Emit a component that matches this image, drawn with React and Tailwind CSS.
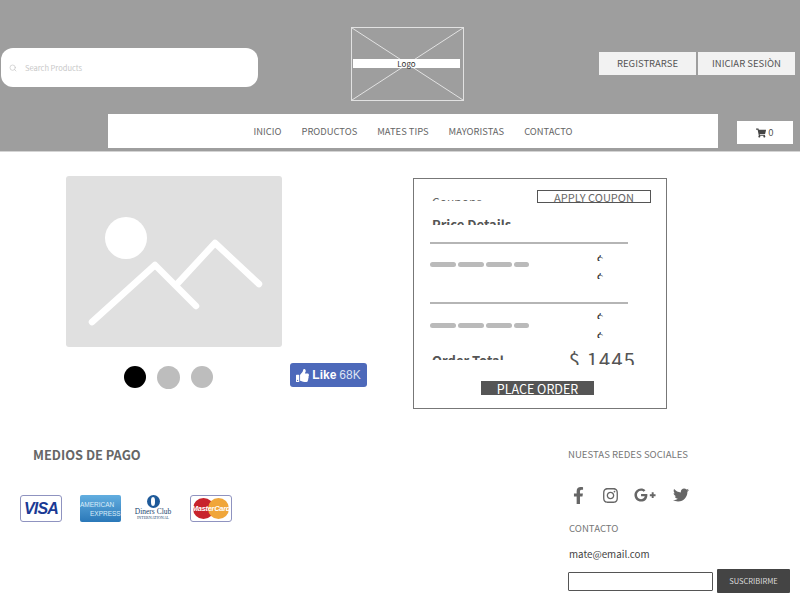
import React from "react";
import { Search } from "lucide-react";
import {
  FaFacebookF,
  FaInstagram,
  FaGooglePlusG,
  FaTwitter,
  FaThumbsUp,
  FaShoppingCart,
} from "react-icons/fa";

const navItems = ["INICIO", "PRODUCTOS", "MATES TIPS", "MAYORISTAS", "CONTACTO"];

const Bars = () => (
  <div className="flex gap-[2px]">
    <div className="w-[26px] h-[5px] rounded-full bg-[#bababa]"></div>
    <div className="w-[26px] h-[5px] rounded-full bg-[#bababa]"></div>
    <div className="w-[26px] h-[5px] rounded-full bg-[#bababa]"></div>
    <div className="w-[15px] h-[5px] rounded-full bg-[#bababa]"></div>
  </div>
);

const Dollar = () => (
  <div className="h-[8px] overflow-hidden text-[14px] leading-[16px] text-[#333]">$</div>
);

const Header = () => (
  <header className="h-[152px] bg-[#9e9e9e] border-b border-[#d4d4d4]">
    <div className="flex items-start h-[114px]">
      <div className="flex items-center ml-[1px] mt-[48px] w-[257px] h-[39px] rounded-[12px] bg-white pl-[8px]">
        <Search size={8} className="text-[#c4c4c4]" />
        <span className="ml-[8px] text-[7.5px] text-[#c8c8c8]">Search Products</span>
      </div>
      <div className="relative ml-[93px] mt-[27px] w-[113px] h-[74px] border border-[#e2e2e2]">
        <svg className="w-full h-full" viewBox="0 0 111 72" preserveAspectRatio="none">
          <path d="M0 0L111 72M111 0L0 72" stroke="#e2e2e2" strokeWidth="1" fill="none" />
        </svg>
        <div className="absolute left-[1px] top-[31px] w-[107px] h-[9px] bg-white flex items-center justify-center text-[8px] leading-none text-[#333]">
          Logo
        </div>
      </div>
      <div className="flex ml-[135px] mt-[52px] gap-[2px]">
        <div className="w-[97px] h-[23px] bg-[#f2f2f2] flex items-center justify-center text-[9.5px] text-[#555]">REGISTRARSE</div>
        <div className="w-[97px] h-[23px] bg-[#f2f2f2] flex items-center justify-center text-[9.5px] text-[#555]">INICIAR SESIÒN</div>
      </div>
    </div>
    <div className="flex items-start">
      <nav className="flex items-center justify-center gap-[20px] ml-[108px] w-[610px] h-[34px] bg-white text-[9.4px] text-[#666]">
        {navItems.map((item) => (
          <span key={item}>{item}</span>
        ))}
      </nav>
      <div className="flex items-center justify-center gap-[2px] ml-[19px] mt-[7px] w-[56px] h-[23px] bg-white text-[9.5px] text-[#555]">
        <FaShoppingCart size={10} className="text-[#444]" />
        <span>0</span>
      </div>
    </div>
  </header>
);

const Gallery = () => (
  <div className="ml-[66px] mt-[24px] w-[302px]">
    <div className="w-[216px] h-[171px] rounded-[3px] bg-[#e0e0e0]">
      <svg width="216" height="171" viewBox="0 0 216 171" fill="none">
        <circle cx="60" cy="62" r="21" fill="white" />
        <path
          d="M26 146L89 89L130 130M112 107L149 67L193 108"
          stroke="white"
          strokeWidth="6.5"
          strokeLinecap="round"
          strokeLinejoin="round"
        />
      </svg>
    </div>
    <div className="flex items-start mt-[16px]">
      <div className="w-[22px] h-[22px] ml-[58px] mt-[3px] rounded-full bg-black"></div>
      <div className="w-[23px] h-[23px] ml-[11px] mt-[3px] rounded-full bg-[#bdbdbd]"></div>
      <div className="w-[22px] h-[22px] ml-[11px] mt-[3px] rounded-full bg-[#bdbdbd]"></div>
      <div className="flex items-center justify-center gap-[3px] ml-[77px] w-[77px] h-[24px] rounded-[3px] bg-[#4d69ba] text-[12px] text-white font-['Liberation_Sans',sans-serif]">
        <FaThumbsUp size={13} />
        <span className="font-bold">Like</span>
        <span className="text-[#dfe4f3]">68K</span>
      </div>
    </div>
  </div>
);

const OrderCard = () => (
  <div className="ml-[45px] mt-[26px] w-[254px] h-[231px] border border-[#777] pl-[16px]">
    <div className="flex items-start h-[23px]">
      <div className="ml-[2px] mt-[15px] h-[7px] overflow-hidden text-[12px] leading-[16px] text-[#666]">Coupons</div>
      <div className="ml-auto mr-[15px] mt-[11px] w-[114px] h-[13px] border border-[#555] overflow-hidden text-center text-[11px] leading-[12px] text-[#666]">
        APPLY COUPON
      </div>
    </div>
    <div className="ml-[2px] mt-[14px] h-[9px] overflow-hidden text-[13px] leading-[18px] font-bold text-[#555]">Price Details</div>
    <div className="mt-[17px] w-[198px] h-[2px] bg-[#b5b5b5]"></div>
    <div className="flex items-start w-[174px] h-[58px]">
      <div className="mt-[18px]"><Bars /></div>
      <div className="ml-auto mt-[9px] flex flex-col gap-[10px]">
        <Dollar />
        <Dollar />
      </div>
    </div>
    <div className="w-[198px] h-[2px] bg-[#b5b5b5]"></div>
    <div className="flex items-start w-[174px] h-[46px]">
      <div className="mt-[19px]"><Bars /></div>
      <div className="ml-auto mt-[7px] flex flex-col gap-[11px]">
        <Dollar />
        <Dollar />
      </div>
    </div>
    <div className="flex items-start w-[206px] h-[15px] overflow-hidden">
      <div className="ml-[2px] mt-[2px] h-[8px] overflow-hidden text-[13px] leading-[18px] font-bold text-[#555]">Order Total</div>
      <div className="ml-auto -mt-[3px] text-[20px] leading-[26px] tracking-[1.2px] text-[#555]">$ 1445</div>
    </div>
    <div className="ml-[51px] mt-[16px] w-[113px] h-[14px] overflow-hidden bg-[#555] text-center text-[12.5px] leading-[16px] text-white">
      PLACE ORDER
    </div>
  </div>
);

const Visa = () => (
  <div className="w-[42px] h-[27px] rounded-[3px] border border-[#8f93c0] bg-white flex items-center justify-center text-[16px] leading-none font-bold italic text-[#1a3a94] font-['Liberation_Sans',sans-serif] tracking-[-0.8px]">
    VISA
  </div>
);

const Amex = () => (
  <div className="flex flex-col items-start justify-center w-[41px] h-[27px] rounded-[2px] bg-gradient-to-b from-[#62aee0] to-[#2a78b8] text-[6.5px] leading-[9px] text-[#dcedf9] font-['Liberation_Sans',sans-serif] overflow-hidden">
    <span className="whitespace-nowrap">AMERICAN</span>
    <span className="ml-[10px] whitespace-nowrap">EXPRESS</span>
  </div>
);

const Diners = () => (
  <div className="flex flex-col items-center w-[36px] h-[27px] font-['Liberation_Serif',serif] text-[#24486f]">
    <div className="flex items-center justify-center w-[13px] h-[13px] rounded-full bg-[#1f5a99]">
      <div className="w-[8px] h-[9px] rounded-full bg-white border-x-2 border-[#1f5a99]"></div>
    </div>
    <span className="text-[7.5px] leading-[8px] whitespace-nowrap">Diners Club</span>
    <span className="text-[4px] leading-[4px] whitespace-nowrap">INTERNATIONAL</span>
  </div>
);

const MasterCard = () => (
  <div className="relative w-[42px] h-[27px] rounded-[3px] border border-[#8f93c0] bg-white overflow-hidden">
    <div className="absolute left-[2px] top-[2px] w-[21px] h-[21px] rounded-full bg-[#c8232c]"></div>
    <div className="absolute left-[17px] top-[2px] w-[21px] h-[21px] rounded-full bg-[#f0a63a]"></div>
    <div className="absolute inset-0 flex items-center justify-center text-[7.5px] font-bold italic text-white font-['Liberation_Sans',sans-serif] tracking-[-0.3px]">
      MasterCard
    </div>
  </div>
);

const Footer = () => (
  <footer className="flex items-start">
    <div className="ml-[20px] w-[548px]">
      <h3 className="ml-[13px] mt-[5px] text-[12.8px] leading-[20px] font-bold text-[#666]">MEDIOS DE PAGO</h3>
      <div className="flex items-center mt-[30px]">
        <Visa />
        <div className="ml-[18px]"><Amex /></div>
        <div className="ml-[14px]"><Diners /></div>
        <div className="ml-[19px]"><MasterCard /></div>
      </div>
    </div>
    <div className="w-[232px] pt-[7px]">
      <div className="text-[9.6px] leading-[14px] text-[#777]">NUESTAS REDES SOCIALES</div>
      <div className="flex items-center mt-[23px] ml-[2px] text-[#666]">
        <FaFacebookF size={17} />
        <FaInstagram size={17} className="ml-[15px]" />
        <FaGooglePlusG size={22} className="ml-[15px]" />
        <FaTwitter size={16} className="ml-[17px]" />
      </div>
      <div className="mt-[15px] ml-[1px] text-[9.6px] leading-[14px] text-[#777]">CONTACTO</div>
      <div className="mt-[12px] ml-[1px] text-[9.8px] leading-[14px] text-[#444]">mate@email.com</div>
      <div className="flex items-center mt-[8px]">
        <div className="w-[145px] h-[19px] rounded-[1px] border border-[#555] bg-white"></div>
        <div className="flex items-center justify-center ml-[4px] w-[73px] h-[24px] rounded-[1px] bg-[#444] text-[7.5px] text-[#ddd]">SUSCRIBIRME</div>
      </div>
    </div>
  </footer>
);

const App = () => {
  return (
    <div className="w-[800px] h-[600px] overflow-hidden bg-white font-['Noto_Sans_CJK_JP','Noto_Sans',sans-serif]">
      <Header />
      <main className="flex items-start h-[288px]">
        <Gallery />
        <OrderCard />
      </main>
      <Footer />
    </div>
  );
};

export default App;
